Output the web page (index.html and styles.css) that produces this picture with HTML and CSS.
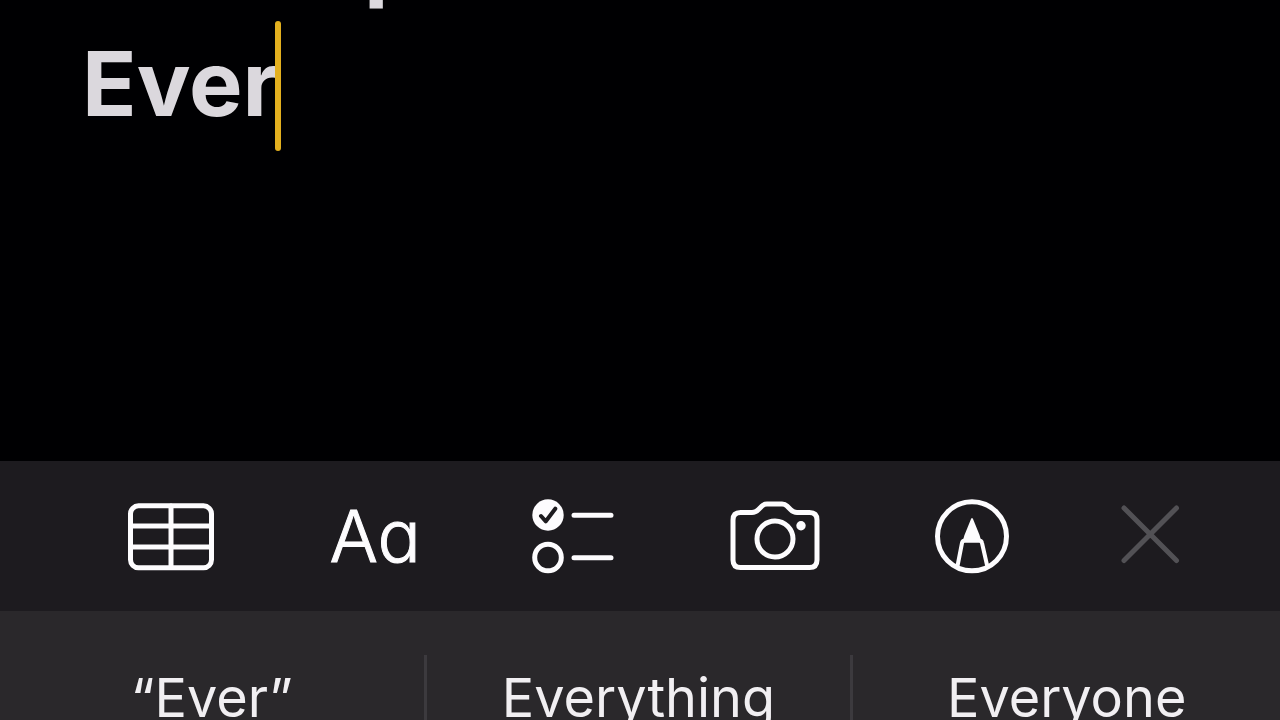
FILE: index.html
```html
<!DOCTYPE html>
<html lang="en">
<head>
<meta charset="utf-8">
<meta name="viewport" content="width=device-width, initial-scale=1">
<title>Note</title>
<link rel="stylesheet" href="styles.css">
</head>
<body>
<main class="note">
  <div class="line line-above">p</div>
  <div class="line">Ever<span class="caret"></span></div>
</main>
<div class="toolbar" role="toolbar" aria-label="Formatting">
  <button class="tool" type="button" aria-label="Table">
    <svg class="icon" width="90" height="90" viewBox="0 0 90 90">
      <rect x="3.5" y="14.8" width="81" height="62" rx="8"/>
      <path d="M4 35H84M4 56H84M44 15V76"/>
    </svg>
  </button>
  <button class="tool tool-text" type="button" aria-label="Text style">Aa</button>
  <button class="tool" type="button" aria-label="Checklist">
    <svg class="icon" width="84" height="90" viewBox="0 0 84 90">
      <circle class="solid" cx="15" cy="24" r="15.7"/>
      <path class="tick" d="M8 25L12.8 30.3L22.3 17.7"/>
      <circle cx="15" cy="66.5" r="13.3"/>
      <path d="M41 24.3H78M41 66.8H78"/>
    </svg>
  </button>
  <button class="tool" type="button" aria-label="Camera">
    <svg class="icon" width="92" height="90" viewBox="0 0 92 90">
      <path d="M10.5 21.5H22C25 21.5 26.5 20.5 28.5 18.5L32 15C33.5 13.5 35 13 37 13H52C54 13 55.5 13.5 57 15L60.5 18.5C62.5 20.5 64 21.5 67 21.5H79.5Q87 21.5 87 29V69Q87 76.5 79.5 76.5H10.5Q3 76.5 3 69V29Q3 21.5 10.5 21.5Z"/>
      <circle cx="45" cy="48" r="18"/>
      <circle class="solid" cx="71" cy="34.7" r="4.7"/>
    </svg>
  </button>
  <button class="tool" type="button" aria-label="Markup">
    <svg class="icon" width="74" height="90" viewBox="0 0 74 90">
      <circle cx="38" cy="45.3" r="34.5"/>
      <path class="solid" d="M37 28Q38 26 39 28L45.5 44Q48 51.5 46 51.5H30Q28 51.5 30.5 44Z"/>
      <path class="thin" d="M23.5 75L28 52Q28.5 49.5 31 49.5H45Q47.5 49.5 48 52L53 74"/>
    </svg>
  </button>
  <button class="tool" type="button" aria-label="Close">
    <svg class="icon icon-dim" width="60" height="90" viewBox="0 0 60 90">
      <path d="M4 17L56.5 69.5M56.5 17L4 69.5"/>
    </svg>
  </button>
</div>
<div class="suggestions">
  <button class="suggestion" type="button">“Ever”</button>
  <button class="suggestion" type="button">Everything</button>
  <button class="suggestion" type="button">Everyone</button>
</div>
</body>
</html>
```
FILE: styles.css
```css
* {
  box-sizing: border-box;
}

body {
  margin: 0;
  height: 100vh;
  display: flex;
  flex-direction: column;
  overflow: hidden;
  background: #000002;
  color: #dbd8dd;
  font-family: Inter, "Liberation Sans", sans-serif;
}

button {
  margin: 0;
  padding: 0;
  border: 0;
  background: none;
  color: inherit;
  font: inherit;
}

.note {
  flex: 1;
  min-height: 0;
  display: flex;
  flex-direction: column;
  padding-left: 82px;
  overflow: hidden;
}

.line {
  flex: none;
  display: flex;
  align-items: flex-start;
  height: 126px;
  font-size: 90px;
  line-height: 126px;
  font-weight: 700;
}

.line-above {
  margin-top: -105px;
  padding-left: 282px;
}

.caret {
  width: 6px;
  height: 130px;
  margin-left: -4px;
  border-radius: 3px;
  background: #e3b01f;
}

.toolbar {
  flex: none;
  display: flex;
  align-items: center;
  justify-content: space-between;
  height: 150px;
  padding: 0 100px 0 127px;
  background: #1d1b1f;
  color: #fdfcfe;
}

.tool {
  display: block;
}

.tool-text {
  width: 92px;
  font-size: 72px;
  line-height: 90px;
  font-weight: 300;
  font-feature-settings: "cv11";
  -webkit-text-stroke: 1px currentColor;
}

.icon {
  display: block;
  overflow: visible;
  fill: none;
  stroke: currentColor;
  stroke-width: 5;
  stroke-linecap: round;
  stroke-linejoin: round;
}

.icon-dim {
  color: #525155;
}

.solid {
  fill: currentColor;
  stroke: none;
}

.thin {
  stroke-width: 4;
}

.tick {
  stroke: #1d1b1f;
  stroke-width: 4;
}

.suggestions {
  flex: none;
  display: grid;
  grid-template-columns: repeat(3, 1fr);
  height: 109px;
  padding-top: 44px;
  overflow: hidden;
  background: #2a282b;
  color: #f1eff2;
}

.suggestion {
  height: 86px;
  font-size: 54px;
  line-height: 86px;
  font-weight: 400;
}

.suggestion:not(:last-child) {
  border-right: 3px solid #3c3a3e;
}
```
